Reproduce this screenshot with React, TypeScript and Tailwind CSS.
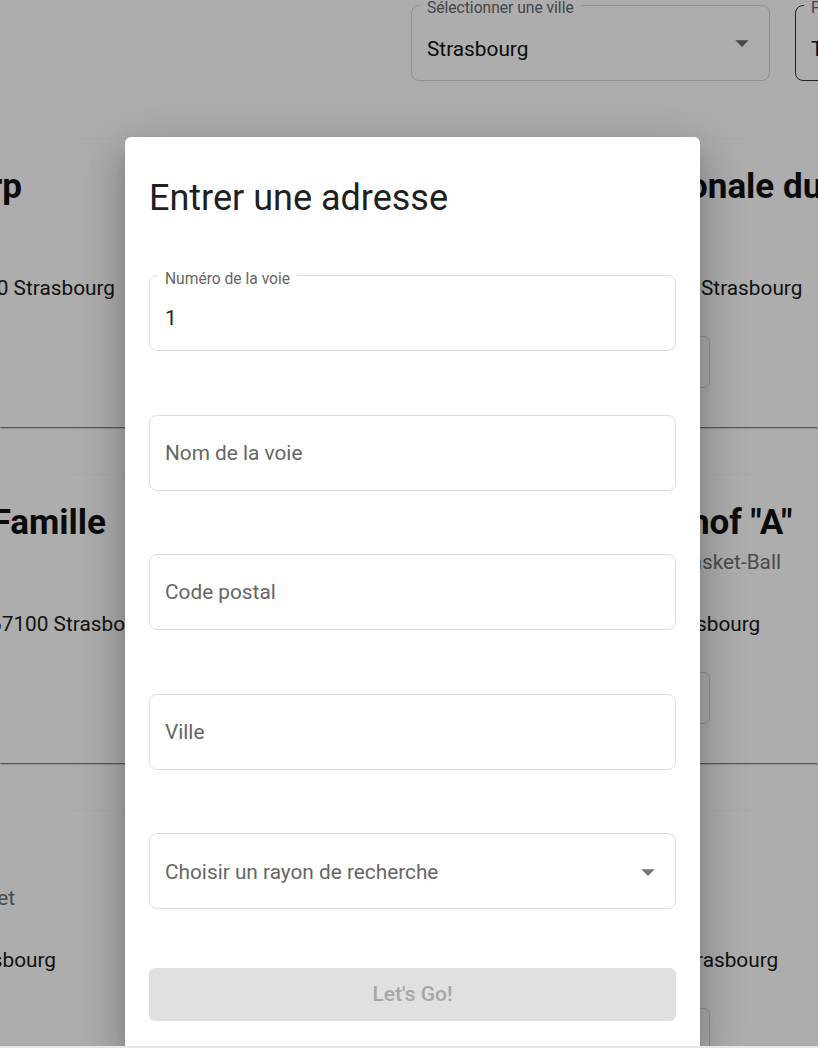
import React from "react";

interface Lieu {
  titre: [string, string];
  sport: [string, string];
  adresse: [string, string];
  // gauche : décalage de fin de ligne ; droite : largeur de la partie cachée
  fin: [string, string, string];
}

// [partie cachée, partie visible] : la gauche est coupée par le bord, la droite par la modale
const lignes: { gauche: Lieu; droite: Lieu }[] = [
  {
    gauche: {
      titre: ["Gymnase du Sa", "rp"],
      sport: ["Handball", ""],
      adresse: ["8 rue du Sarp, 6700", "0 Strasbourg"],
      fin: ["pr-[378px]", "pr-[440px]", "pr-[285px]"],
    },
    droite: {
      titre: ["Piscine Nati", "onale du Wacken"],
      sport: ["Natation", ""],
      adresse: ["1 rue Fritz Kieffer, 67000 ", "Strasbourg"],
      fin: ["w-[278px]", "w-[288px]", "w-[291px]"],
    },
  },
  {
    gauche: {
      titre: ["Gymnase de la ", "Famille"],
      sport: ["Volley", ""],
      adresse: ["2 rue de la Famille, 6", "7100 Strasbourg"],
      fin: ["pr-[294px]", "pr-[440px]", "pr-[245px]"],
    },
    droite: {
      titre: ["Gymnase Lingols", "hof \"A\""],
      sport: ["Ba", "sket-Ball"],
      adresse: ["4 rue du Lingolsheim, 67200 Stra", "sbourg"],
      fin: ["w-[280px]", "w-[292px]", "w-[286px]"],
    },
  },
  {
    gauche: {
      titre: ["Stade Vauban", ""],
      sport: ["Baske", "t"],
      adresse: ["12 rue Vauban, 67000 Stra", "sbourg"],
      fin: ["pr-[440px]", "pr-[385px]", "pr-[344px]"],
    },
    droite: {
      titre: ["Stade", ""],
      sport: ["Foot", ""],
      adresse: ["6 route du Rhin, 67000 St", "rasbourg"],
      fin: ["w-[288px]", "w-[288px]", "w-[286px]"],
    },
  },
];

function Triangle({ className }: { className: string }) {
  return (
    <svg viewBox="0 0 24 24" className={className} fill="currentColor">
      <path d="M7 10l5 5 5-5z" />
    </svg>
  );
}

function Champ({
  label,
  valeur,
  select,
}: {
  label: string;
  valeur?: string;
  select?: boolean;
}) {
  return (
    <div className="relative flex h-[76px] items-center rounded-[8px] border border-[#dedede] pl-[15px] pr-[11px]">
      {valeur !== undefined && (
        <span className="absolute left-[8px] top-[-7px] bg-white px-[7px] text-[15.6px] leading-[20px] text-[#666]">
          {label}
        </span>
      )}
      <span
        className={
          valeur !== undefined
            ? "mt-[11px] flex-1 text-[20.8px] text-[#222]"
            : select
              ? "mt-[4px] flex-1 text-[20.8px] text-[#666]"
              : "mt-[2px] flex-1 text-[20.8px] text-[#666]"
        }
      >
        {valeur !== undefined ? valeur : label}
      </span>
      {select && <Triangle className="mt-[2px] h-[32px] w-[32px] text-[#777]" />}
    </div>
  );
}

function Colonne({ lieu, cote }: { lieu: Lieu; cote: "gauche" | "droite" }) {
  const ligne = (parts: [string, string], classes: string, fin: string) =>
    cote === "gauche" ? (
      <div className={`flex justify-end whitespace-nowrap ${fin} ${classes}`}>
        <span className="shrink-0">
          {parts[0]}
          {parts[1]}
        </span>
      </div>
    ) : (
      <div className={`flex whitespace-nowrap ${classes}`}>
        <span className={`flex shrink-0 justify-end ${fin}`}>{parts[0]}</span>
        <span>{parts[1]}</span>
      </div>
    );

  return (
    <div className="flex flex-col pt-[27px]">
      {ligne(lieu.titre, "h-[42px] text-[35px] leading-[42px] font-bold text-[#111]", lieu.fin[0])}
      {ligne(lieu.sport, "mt-[4px] h-[28px] text-[20.8px] leading-[28px] text-[#6f6f6f]", lieu.fin[1])}
      {ligne(lieu.adresse, "mt-[34px] h-[28px] text-[20.8px] leading-[28px] text-[#1a1a1a]", lieu.fin[2])}
      {cote === "droite" ? (
        <div className="mt-[34px] ml-[140px] h-[52px] w-[160px] rounded-[6px] border border-[#d0d0d0]" />
      ) : (
        <div className="mt-[34px] h-[52px]" />
      )}
    </div>
  );
}

export default function App() {
  return (
    <div className="relative h-[1048px] w-[818px] overflow-hidden bg-white font-['Roboto','Liberation_Sans',sans-serif]">
      {/* ENTÊTE */}
      <div className="flex h-[138px] items-start gap-[25px] pl-[411px] pt-[5px]">
        <div className="relative flex h-[76px] w-[359px] shrink-0 items-center rounded-[8px] border border-[#d4d4d4] pl-[15px] pr-[11px]">
          <span className="absolute left-[8px] top-[-8px] bg-white px-[7px] text-[15.6px] leading-[20px] text-[#666]">
            Sélectionner une ville
          </span>
          <span className="mt-[14px] flex-1 text-[20.8px] text-[#111]">Strasbourg</span>
          <Triangle className="h-[32px] w-[32px] text-[#6a6a6a]" />
        </div>
        <div className="relative flex h-[76px] w-[300px] shrink-0 items-center rounded-[8px] border border-[#333] pl-[15px]">
          <span className="absolute left-[8px] top-[-8px] bg-white px-[7px] text-[15.6px] leading-[20px] text-[#666]">
            Filtrer par sport
          </span>
          <span className="mt-[14px] text-[20.8px] text-[#111]">Tous les sports</span>
        </div>
      </div>

      {/* LISTE */}
      <div className="flex flex-col gap-[48px] pt-[1px]">
        {lignes.map((l, i) => (
          <div
            key={i}
            className="flex h-[288px] bg-white shadow-[0_2px_1px_-1px_rgba(0,0,0,0.3),0_1px_1px_0_rgba(0,0,0,0.2),0_1px_3px_0_rgba(0,0,0,0.14)]"
          >
            <div className="w-[400px] shrink-0">
              <Colonne lieu={l.gauche} cote="gauche" />
            </div>
            <div className="ml-[10px] w-[700px] shrink-0">
              <Colonne lieu={l.droite} cote="droite" />
            </div>
          </div>
        ))}
      </div>

      {/* FOND */}
      <div className="absolute inset-0 bg-black/[0.32]" />

      {/* MODALE */}
      <div className="absolute left-[125px] top-[137px] h-[909px] w-[575px] rounded-t-[6px] bg-white px-[24px] pt-[40px] shadow-[0_11px_15px_-7px_rgba(0,0,0,0.2),0_24px_38px_3px_rgba(0,0,0,0.14),0_9px_46px_8px_rgba(0,0,0,0.12)]">
        <h2 className="h-[42px] text-[36px] leading-[42px] text-[#1f1f1f]">Entrer une adresse</h2>
        <div className="mt-[56px] flex flex-col gap-[63.5px]">
          <Champ label="Numéro de la voie" valeur="1" />
          <Champ label="Nom de la voie" />
          <Champ label="Code postal" />
          <Champ label="Ville" />
          <Champ label="Choisir un rayon de recherche" select />
        </div>
        <button
          disabled
          className="mt-[59px] flex h-[53px] w-full items-center justify-center rounded-[6px] bg-[#e0e0e0] text-[21px] font-medium text-[#a6a6a6]"
        >
          Let's Go!
        </button>
      </div>

      <div className="absolute bottom-0 left-0 h-[2px] w-full bg-[#e6e6e6]" />
    </div>
  );
}
